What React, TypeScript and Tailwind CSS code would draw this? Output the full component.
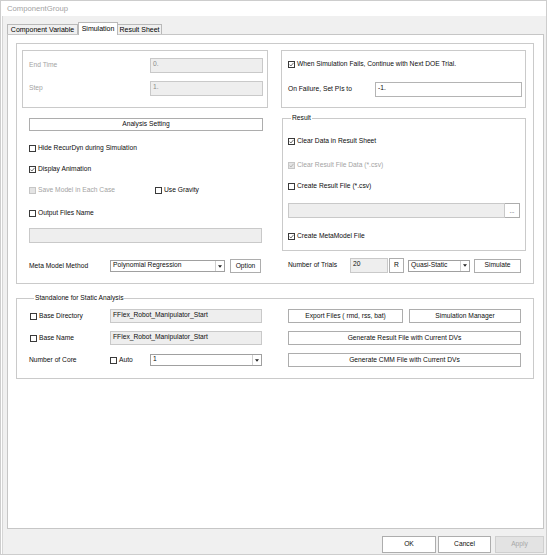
import React from 'react';

const Check: React.FC<{ checked?: boolean; disabled?: boolean }> = ({ checked, disabled }) => (
  <span
    className={`w-[7px] h-[7px] shrink-0 border flex items-center justify-center ${
      disabled ? 'border-[#c6c6c6] bg-[#e4e4e4]' : 'border-[#3a3a3a] bg-white'
    }`}
  >
    {checked && (
      <svg viewBox="0 0 5 5" className="w-[5px] h-[5px]">
        <path d="M0.5 2.6 L1.9 4 L4.6 0.8" fill="none" stroke={disabled ? '#a9a9a9' : '#4a4a4a'} strokeWidth="0.8" />
      </svg>
    )}
  </span>
);

const CheckRow: React.FC<{ label: string; checked?: boolean; disabled?: boolean; className?: string }> = ({
  label,
  checked,
  disabled,
  className = '',
}) => (
  <div className={`flex items-center gap-[2px] h-[12px] ${className}`}>
    <Check checked={checked} disabled={disabled} />
    <span className={disabled ? 'text-[#a3a3a3]' : ''}>{label}</span>
  </div>
);

const Btn: React.FC<{ children: React.ReactNode; className?: string }> = ({ children, className = '' }) => (
  <div className={`border border-[#adadad] bg-white flex items-center justify-center shrink-0 ${className}`}>{children}</div>
);

const Field: React.FC<{ value?: string; className?: string; white?: boolean; muted?: boolean }> = ({
  value,
  className = '',
  white,
  muted,
}) => (
  <div
    className={`border shrink-0 pl-[2px] pt-[2px] ${white ? 'bg-white border-[#b4b4b4]' : 'bg-[#eeeeee] border-[#c9c9c9]'} ${
      muted ? 'text-[#8c8c8c]' : ''
    } ${className}`}
  >
    {value}
  </div>
);

const Select: React.FC<{ value: string; className?: string }> = ({ value, className = '' }) => (
  <div className={`border border-[#a0a0a0] bg-white flex shrink-0 ${className}`}>
    <span className="flex-1 pl-[2px] pt-[1px]">{value}</span>
    <span className="w-[9px] border-l border-[#cfcfcf] flex items-center justify-center">
      <svg viewBox="0 0 5 3" className="w-[4px] h-[3px]">
        <path d="M0 0 H5 L2.5 3 Z" fill="#222" />
      </svg>
    </span>
  </div>
);

export default function App() {
  return (
    <div className="w-[551px] h-[558px] bg-white font-['Liberation_Sans',Arial,sans-serif] text-[6.7px] leading-none text-[#0d0d0d]">
      <div className="w-[547px] h-[555px] border border-[#cdcdcd] flex flex-col">
        <div className="h-[15px] pl-[6px] flex items-center text-[7.7px] text-[#a3a3a3]">ComponentGroup</div>

        <div className="flex-1 bg-[#f0f0f0] ml-[1px] border-l border-[#d6d6d6] pl-[4px] pt-[5px] flex flex-col">
          {/* tab strip */}
          <div className="flex items-end h-[13px] text-[7px] text-black">
            <div className="w-[71px] h-[10px] border border-b-0 border-[#b9b9b9] bg-[#f0f0f0] flex items-center justify-center">
              Component Variable
            </div>
            <div className="w-[40px] h-[13px] border border-b-0 border-[#b9b9b9] bg-white flex items-center justify-center relative z-10 -mb-[1px] pb-[1px]">
              Simulation
            </div>
            <div className="w-[44px] h-[10px] border border-b-0 border-l-0 border-[#b9b9b9] bg-[#f0f0f0] flex items-center justify-center">
              Result Sheet
            </div>
          </div>

          {/* tab page */}
          <div className="w-[537px] h-[495px] bg-white border border-[#c6c6c6] pl-[8px] pt-[8px]">
            <div className="w-[518px] h-[241px] border border-[#cacaca] px-[5px] pt-[6px] flex gap-[13px]">
              {/* left column */}
              <div className="w-[246px] flex flex-col">
                <div className="h-[58px] border border-[#cacaca] pl-[6px] pt-[7px] flex flex-col gap-[8px] text-[#a3a3a3]">
                  <div className="flex items-center h-[15px]">
                    <span className="w-[121px]">End Time</span>
                    <Field value="0." className="w-[113px] h-[15px]" muted />
                  </div>
                  <div className="flex items-center h-[15px]">
                    <span className="w-[121px]">Step</span>
                    <Field value="1." className="w-[113px] h-[15px]" muted />
                  </div>
                </div>

                <Btn className="mt-[10px] ml-[7px] w-[234px] h-[13px]">Analysis Setting</Btn>
                <CheckRow className="mt-[11px] ml-[7px]" label="Hide RecurDyn during Simulation" />
                <CheckRow className="mt-[9px] ml-[7px]" label="Display Animation" checked />
                <div className="mt-[9px] ml-[7px] flex">
                  <CheckRow className="w-[126px]" label="Save Model in Each Case" disabled />
                  <CheckRow label="Use Gravity" />
                </div>
                <CheckRow className="mt-[11px] ml-[7px]" label="Output Files Name" />
                <Field className="mt-[9px] ml-[7px] w-[233px] h-[15px]" />

                <div className="mt-[16px] ml-[7px] h-[14px] flex items-center">
                  <span className="w-[81px]">Meta Model Method</span>
                  <Select value="Polynomial Regression" className="w-[115px] h-[12px]" />
                  <Btn className="ml-[5px] w-[31px] h-[14px]">Option</Btn>
                </div>
              </div>

              {/* right column */}
              <div className="w-[245px] flex flex-col">
                <div className="h-[58px] border border-[#cacaca] pl-[6px] pt-[7px] flex flex-col">
                  <CheckRow className="h-[11px]" label="When Simulation Fails, Continue with Next DOE Trial." checked />
                  <div className="mt-[12px] h-[15px] flex items-center">
                    <span className="w-[87px]">On Failure, Set PIs to</span>
                    <Field value="-1." white className="w-[147px] h-[15px]" />
                  </div>
                </div>

                <fieldset className="mt-[5px] ml-[1px] w-[244px] h-[138px] border border-[#cacaca] px-[5px] pt-[12px]">
                  <legend className="ml-[3px] px-[1px] h-[10px] leading-[10px]">Result</legend>
                  <CheckRow label="Clear Data in Result Sheet" checked />
                  <CheckRow className="mt-[12px]" label="Clear Result File Data (*.csv)" checked disabled />
                  <CheckRow className="mt-[9px]" label="Create Result File (*.csv)" />
                  <div className="mt-[11px] flex">
                    <Field className="w-[217px] h-[15px]" />
                    <Btn className="w-[15px] h-[15px] border-l-0 text-[6px]">...</Btn>
                  </div>
                  <CheckRow className="mt-[12px]" label="Create MetaModel File" checked />
                </fieldset>

                <div className="mt-[7px] ml-[7px] h-[15px] flex items-center">
                  <span className="w-[62px]">Number of Trials</span>
                  <Field value="20" className="w-[38px] h-[15px] border-[#a9a9a9]" />
                  <Btn className="ml-[1px] w-[15px] h-[15px]">R</Btn>
                  <Select value="Quasi-Static" className="ml-[4px] w-[62px] h-[12px]" />
                  <Btn className="ml-[4px] w-[47px] h-[14px]">Simulate</Btn>
                </div>
              </div>
            </div>

            {/* standalone analysis */}
            <fieldset className="mt-[9px] w-[518px] h-[86px] border border-[#cacaca] pl-[13px] pt-[6px]">
              <legend className="ml-[4px] px-[1px] h-[10px] leading-[10px]">Standalone for Static Analysis</legend>
              <div className="flex flex-col gap-[8px]">
                <div className="h-[14px] flex items-center">
                  <CheckRow className="w-[80px]" label="Base Directory" />
                  <Field value="FFlex_Robot_Manipulator_Start" className="w-[152px] h-[14px]" />
                  <Btn className="ml-[26px] w-[115px] h-[14px]">Export Files ( rmd, rss, bat)</Btn>
                  <Btn className="ml-[6px] w-[112px] h-[14px]">Simulation Manager</Btn>
                </div>
                <div className="h-[14px] flex items-center">
                  <CheckRow className="w-[80px]" label="Base Name" />
                  <Field value="FFlex_Robot_Manipulator_Start" className="w-[152px] h-[14px]" />
                  <Btn className="ml-[26px] w-[233px] h-[14px]">Generate Result File with Current DVs</Btn>
                </div>
                <div className="h-[14px] flex items-center">
                  <span className="w-[80px] -ml-[1px]">Number of Core</span>
                  <CheckRow className="w-[40px] ml-[1px]" label="Auto" />
                  <Select value="1" className="w-[112px] h-[12px]" />
                  <Btn className="ml-[26px] w-[233px] h-[14px]">Generate CMM File with Current DVs</Btn>
                </div>
              </div>
            </fieldset>
          </div>

          {/* dialog buttons */}
          <div className="mt-[7px] w-[537px] flex justify-end">
            <Btn className="w-[54px] h-[17px]">OK</Btn>
            <Btn className="ml-[2px] w-[53px] h-[17px]">Cancel</Btn>
            <div className="ml-[4px] w-[49px] h-[17px] border border-[#cfcfcf] bg-[#e3e3e3] text-[#a8a8a8] flex items-center justify-center">
              Apply
            </div>
          </div>
        </div>
      </div>
    </div>
  );
}
